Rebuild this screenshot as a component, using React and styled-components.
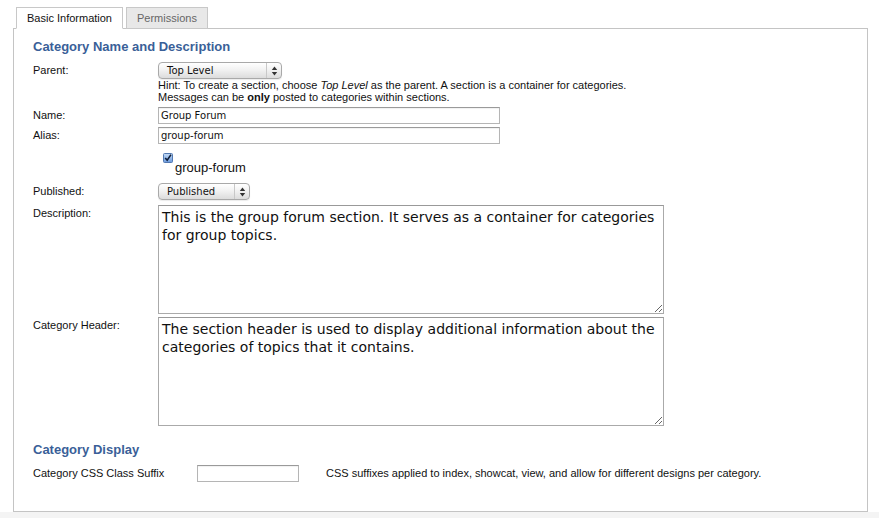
import * as React from 'react'
import styled, { createGlobalStyle } from 'styled-components'

const GlobalStyle = createGlobalStyle`
  html, body {
    margin: 0;
    padding: 0;
    background: #f4f4f4;
  }
  body {
    font-family: "Liberation Sans", Arial, sans-serif;
    font-size: 11px;
    color: #111;
  }
  *, *::before, *::after {
    box-sizing: border-box;
  }
`

const Page = styled.div`
  background: #fff;
  padding: 7px 11px 0 13px;
`

const TabBar = styled.div`
  display: flex;
  gap: 3px;
  padding-left: 3px;
  position: relative;
  z-index: 1;
`

const Tab = styled.div`
  height: 22px;
  padding: 0 10px;
  display: flex;
  align-items: center;
  font-size: 11px;
  border: 1px solid #c8c8c8;
  border-bottom: ${p => (p.$active ? '1px solid #fff' : '1px solid #c8c8c8')};
  background: ${p => (p.$active ? '#fff' : '#e8e8e8')};
  color: ${p => (p.$active ? '#111' : '#666')};
`

const Panel = styled.div`
  margin-top: -1px;
  border: 1px solid #c4c4c4;
  background: #fff;
  padding: 10px 20px 29px 19px;
`

const Heading = styled.h3`
  margin: 0;
  font-size: 13px;
  line-height: 16px;
  font-weight: bold;
  color: #3a5f98;
  margin-top: ${p => p.$top || 0}px;
`

const Row = styled.div`
  display: flex;
  align-items: flex-start;
  margin-top: ${p => p.$top || 0}px;
`

const Label = styled.div`
  width: ${p => p.$width || 125}px;
  flex: none;
  line-height: 14px;
  padding-top: ${p => p.$pad || 0}px;
`

const Field = styled.div`
  display: flex;
  flex-direction: column;
`

const Hint = styled.div`
  line-height: 12px;
`

const SelectBox = styled.div`
  width: ${p => p.$width}px;
  height: 17px;
  border: 1px solid #a9a9a9;
  border-radius: 4px;
  background: linear-gradient(#ffffff, #f2f2f2 45%, #dcdcdc);
  display: flex;
  align-items: center;
  font-family: "DejaVu Sans", sans-serif;
  font-size: 10px;
  box-shadow: 0 1px 1px rgba(0, 0, 0, 0.08);
`

const SelectText = styled.span`
  flex: 1;
  padding-left: 8px;
`

const SelectArrows = styled.span`
  width: 15px;
  height: 100%;
  border-left: 1px solid #c8c8c8;
  display: flex;
  align-items: center;
  justify-content: center;
`

const TextInput = styled.div`
  width: ${p => p.$width}px;
  height: 17px;
  border: 1px solid #b5b5b5;
  border-top-color: #9a9a9a;
  background: #fff;
  padding-left: 2px;
  font-family: "DejaVu Sans", sans-serif;
  font-size: 10px;
  line-height: 15px;
  box-shadow: inset 0 1px 1px rgba(0, 0, 0, 0.06);
`

const CheckWrap = styled.div`
  margin-top: 9px;
  padding-left: 5px;
  display: flex;
  flex-direction: column;
`

const CheckText = styled.div`
  font-size: 13px;
  line-height: 12px;
  margin-top: -1px;
  padding-left: 12px;
`

const TextArea = styled.textarea`
  width: 506px;
  height: 109px;
  border: 1px solid #aaa;
  border-top-color: #999;
  padding: 2px 6px 2px 3px;
  font-family: "DejaVu Sans", sans-serif;
  font-size: 14px;
  line-height: 18px;
  color: #111;
  resize: both;
  outline: none;
  margin: 0;
  display: block;
`

const SuffixNote = styled.div`
  margin-left: 27px;
  line-height: 16px;
`

function Arrows() {
  return (
    <svg width="7" height="10" viewBox="0 0 7 10">
      <path d="M3.5 0.5 L6.2 4 H0.8 Z" fill="#333" />
      <path d="M3.5 9.5 L6.2 6 H0.8 Z" fill="#333" />
    </svg>
  )
}

function Select({ value, width }) {
  return (
    <SelectBox $width={width}>
      <SelectText>{value}</SelectText>
      <SelectArrows>
        <Arrows />
      </SelectArrows>
    </SelectBox>
  )
}

function CheckBox() {
  return (
    <svg width="10" height="10" viewBox="0 0 10 10" style={{ display: 'block' }}>
      <defs>
        <linearGradient id="cb" x1="0" y1="0" x2="0" y2="1">
          <stop offset="0" stopColor="#c4dbf5" />
          <stop offset="1" stopColor="#6b9ade" />
        </linearGradient>
      </defs>
      <rect x="0.5" y="0.5" width="9" height="9" rx="1" fill="url(#cb)" stroke="#5278b0" />
      <path d="M2.2 5 L4.2 7.3 L8 1.6" fill="none" stroke="#0f1e38" strokeWidth="1.6" />
    </svg>
  )
}

export default function App() {
  return (
    <Page>
      <GlobalStyle />
      <TabBar>
        <Tab $active>Basic Information</Tab>
        <Tab>Permissions</Tab>
      </TabBar>
      <Panel>
        <Heading>Category Name and Description</Heading>

        <Row $top={7}>
          <Label $pad={1}>Parent:</Label>
          <Field>
            <Select value="Top Level" width={124} />
            <Hint>
              Hint: To create a section, choose <i>Top Level</i> as the parent. A section is a container for categories.
              <br />
              Messages can be <b>only</b> posted to categories within sections.
            </Hint>
          </Field>
        </Row>

        <Row $top={4}>
          <Label $pad={1}>Name:</Label>
          <TextInput $width={342}>Group Forum</TextInput>
        </Row>

        <Row $top={3}>
          <Label $pad={1}>Alias:</Label>
          <Field>
            <TextInput $width={342}>group-forum</TextInput>
            <CheckWrap>
              <CheckBox />
              <CheckText>group-forum</CheckText>
            </CheckWrap>
          </Field>
        </Row>

        <Row $top={9}>
          <Label $pad={1}>Published:</Label>
          <Select value="Published" width={92} />
        </Row>

        <Row $top={5}>
          <Label $pad={1}>Description:</Label>
          <TextArea
            readOnly
            defaultValue="This is the group forum section. It serves as a container for categories for group topics."
          />
        </Row>

        <Row $top={3}>
          <Label $pad={1}>Category Header:</Label>
          <TextArea
            readOnly
            defaultValue="The section header is used to display additional information about the categories of topics that it contains."
          />
        </Row>

        <Heading $top={16}>Category Display</Heading>

        <Row $top={7}>
          <Label $width={164} $pad={1}>Category CSS Class Suffix</Label>
          <TextInput $width={102} />
          <SuffixNote>
            CSS suffixes applied to index, showcat, view, and allow for different designs per category.
          </SuffixNote>
        </Row>
      </Panel>
    </Page>
  )
}
